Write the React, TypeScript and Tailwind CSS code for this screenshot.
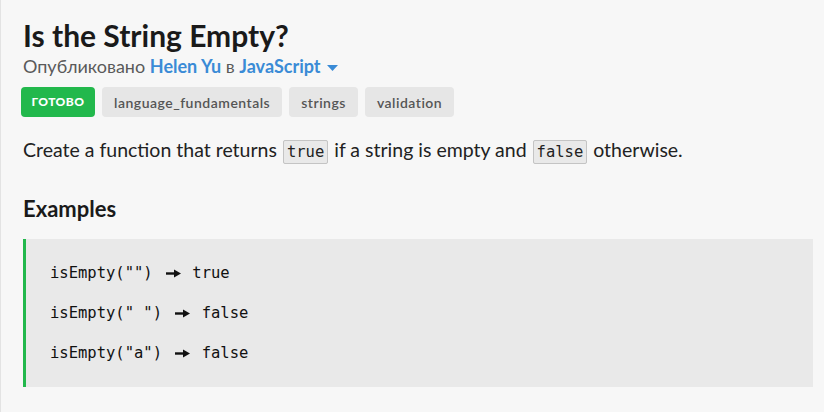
import React from "react";

const tags = ["language_fundamentals", "strings", "validation"];

const examples = ['isEmpty("")', 'isEmpty(" ")', 'isEmpty("a")'];
const results = ["true", "false", "false"];

const Arrow = () => (
  <span className="inline-flex w-[21px] justify-start pl-[4px] align-middle">
    <svg width="15" height="9" viewBox="0 0 15 9">
      <rect x="0" y="3.3" width="9" height="2.4" fill="#111" />
      <path d="M8 0.5 L15 4.5 L8 8.5 Z" fill="#111" />
    </svg>
  </span>
);

const Code = ({ children }: { children: React.ReactNode }) => (
  <code className="mx-[1px] rounded-[2px] border border-[#c4c4c4] bg-[#e9e9e9] px-[3px] py-[2px] font-['DejaVu_Sans_Mono',monospace] text-[15.5px] text-[#222]">
    {children}
  </code>
);

export default function App() {
  return (
    <div className="min-h-[412px] w-[824px] border-l border-[#e3e3e3] bg-[#f7f7f7] pl-[20px] pr-[11px] pt-[17px] font-['Lato',sans-serif]">
      <h1 className="pl-[2px] text-[30px] font-bold leading-[36px] text-[#1a1a1a]">Is the String Empty?</h1>
      <div className="mt-[1px] pl-[2px] text-[18px] leading-[24px] text-[#5a5a5a]">
        Опубликовано <span className="font-bold text-[#3a8bd6]">Helen Yu</span> в{" "}
        <span className="font-bold text-[#3a8bd6]">JavaScript</span>
        <svg className="ml-[6px] inline-block align-middle" width="11" height="6" viewBox="0 0 11 6">
          <path d="M0 0 L11 0 L5.5 6 Z" fill="#3a8bd6" />
        </svg>
      </div>
      <div className="mt-[9px] flex gap-[7px]">
        <span className="flex h-[30px] w-[74px] items-center justify-center rounded-[4px] bg-[#22b84c] text-[12px] font-black tracking-[0.5px] text-white">
          ГОТОВО
        </span>
        {tags.map((t) => (
          <span
            key={t}
            className="flex h-[30px] items-center rounded-[4px] bg-[#e6e6e6] px-[12px] text-[14px] font-semibold tracking-[0.5px] text-[#555]"
          >
            {t}
          </span>
        ))}
      </div>
      <p className="mt-[19px] pl-[2px] text-[19.5px] leading-[28px] text-[#222]">
        Create a function that returns <Code>true</Code> if a string is empty and <Code>false</Code> otherwise.
      </p>
      <h2 className="mt-[28px] pl-[2px] text-[22px] font-bold leading-[30px] text-[#1a1a1a]">Examples</h2>
      <div className="ml-[2px] mt-[15px] flex h-[148px] flex-col justify-center gap-[16px] border-l-[3px] border-[#22b84c] bg-[#e9e9e9] pl-[24px] font-['DejaVu_Sans_Mono',monospace] text-[15.5px] leading-[24px] text-[#111]">
        {examples.map((e, i) => (
          <div key={e} className="whitespace-pre">
            {e} <Arrow /> {results[i]}
          </div>
        ))}
      </div>
    </div>
  );
}
